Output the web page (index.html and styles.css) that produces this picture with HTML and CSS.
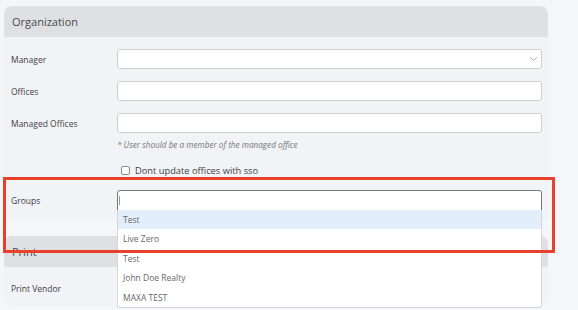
FILE: index.html
```html
<!DOCTYPE html>
<html>
<head>
    <meta name="viewport" content="width=device-width, initial-scale=1.0">
    <link rel="stylesheet" href="styles.css">
</head>

<body>
    <div class="page">
        <div class="card">
            <div class="card-header">Organization</div>
            <div class="card-body">
                <div class="field">
                    <label class="field-label">Manager</label>
                    <div class="input select">
                        <svg class="chevron" width="9" height="6" viewBox="0 0 9 6"><path d="M1 1l3.5 3.5L8 1" fill="none" stroke="#b5b5b5" stroke-width="1"/></svg>
                    </div>
                </div>
                <div class="field">
                    <label class="field-label">Offices</label>
                    <div class="input"></div>
                </div>
                <div class="field field-tight">
                    <label class="field-label">Managed Offices</label>
                    <div class="input"></div>
                </div>
                <p class="hint">* User should be a member of the managed office</p>
                <div class="check-row">
                    <span class="checkbox"></span>
                    <span>Dont update offices with sso</span>
                </div>
                <div class="field field-groups">
                    <label class="field-label">Groups</label>
                    <div class="input focused">
                        <span class="caret"></span>
                        <ul class="menu">
                            <li class="active">Test</li>
                            <li>Live Zero</li>
                            <li>Test</li>
                            <li>John Doe Realty</li>
                            <li>MAXA TEST</li>
                        </ul>
                    </div>
                </div>
            </div>
        </div>

        <div class="card">
            <div class="card-header">Print</div>
            <div class="card-body print-body">
                <div class="field">
                    <label class="field-label">Print Vendor</label>
                    <div class="input"></div>
                </div>
            </div>
        </div>

        <div class="highlight"></div>
    </div>
</body>
</html>
```

FILE: styles.css
```css
* {
    margin: 0;
    padding: 0;
    box-sizing: border-box;
    font-family: 'Open Sans', 'Noto Sans', sans-serif;
}

:root {
    --page-bg: #f5f6f9;
    --card-bg: #f2f3f6;
    --header-bg: #dfe0e4;
    --border: #cfcfd2;
    --text: #3f3f44;
    --muted: #77777c;
    --annotation: #e8412b;
}

body {
    background: var(--page-bg);
    color: var(--text);
    height: 310px;
    overflow: hidden;
}

.page {
    position: relative;
    padding: 6px 30px 0 4px;
}

.card {
    background: var(--card-bg);
    border-radius: 8px;
    overflow: visible;
}

.card + .card {
    margin-top: 15px;
}

.card-header {
    background: var(--header-bg);
    height: 31px;
    line-height: 31px;
    padding-left: 8px;
    font-size: 11px;
    color: #4a4a50;
    border-radius: 8px 8px 0 0;
}

.card-body {
    padding: 12px 6px 10px 7px;
}

.field {
    display: flex;
    align-items: center;
    margin-bottom: 12px;
}

.field-tight {
    margin-bottom: 0;
}

.field-label {
    width: 106px;
    flex-shrink: 0;
    font-size: 8.5px;
    color: var(--text);
}

.input {
    position: relative;
    flex: 1;
    height: 20px;
    background: #fff;
    border: 1px solid var(--border);
    border-radius: 3px;
}

.chevron {
    position: absolute;
    right: 3px;
    top: 6px;
}

.hint {
    margin: 6px 0 0 106px;
    font-size: 8.2px;
    font-style: italic;
    color: var(--muted);
    line-height: 12px;
}

.check-row {
    display: flex;
    align-items: center;
    gap: 5px;
    margin: 12px 0 13px 110px;
    height: 14px;
    font-size: 9.3px;
    color: var(--text);
}

.checkbox {
    width: 9px;
    height: 9px;
    border: 1px solid #8a8a8e;
    border-radius: 2px;
    background: #fff;
}

.field-groups {
    margin-bottom: 0;
}

.focused {
    height: 21px;
    border-color: #77777a;
    border-bottom-left-radius: 0;
    border-bottom-right-radius: 0;
}

.caret {
    position: absolute;
    left: 1px;
    top: 5px;
    width: 1px;
    height: 9px;
    background: #999;
}

.menu {
    position: absolute;
    top: 100%;
    left: -1px;
    right: -1px;
    list-style: none;
    background: #fff;
    border: 1px solid #d6d6d8;
    border-top: none;
    border-radius: 0 0 3px 3px;
    z-index: 2;
}

.menu li {
    height: 19.4px;
    line-height: 19.4px;
    padding-left: 5px;
    font-size: 8.5px;
    color: #67676c;
}

.menu li.active {
    background: #e3eefb;
}

.print-body {
    padding: 11px 6px 8px 7px;
}

.print-body .field {
    margin-bottom: 0;
}

.highlight {
    position: absolute;
    left: 3px;
    top: 177px;
    width: 552px;
    height: 76px;
    border: 3px solid var(--annotation);
    z-index: 3;
    pointer-events: none;
}
```
